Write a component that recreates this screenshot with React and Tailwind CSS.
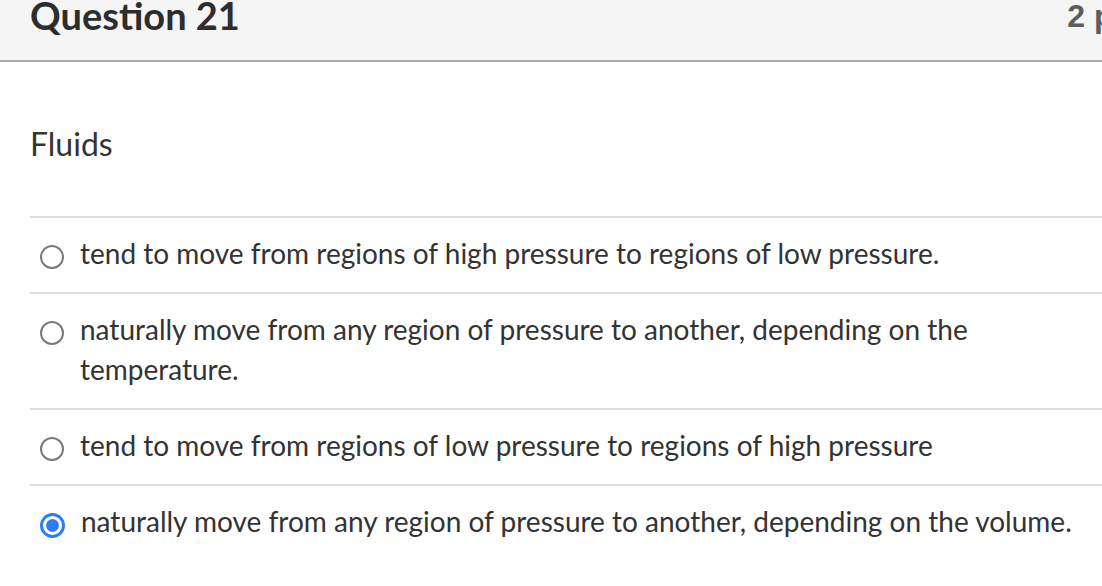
import React from "react";

const opciones = [
  { id: 1, texto: "tend to move from regions of high pressure to regions of low pressure." },
  {
    id: 2,
    texto: "naturally move from any region of pressure to another, depending on the temperature.",
  },
  { id: 3, texto: "tend to move from regions of low pressure to regions of high pressure" },
  {
    id: 4,
    texto: "naturally move from any region of pressure to another, depending on the volume.",
    marcada: true,
  },
];

const Radio = ({ marcada }) =>
  marcada ? (
    <span className="w-[25px] h-[25px] rounded-full border-[3px] border-[#2f7cf6] flex items-center justify-center shrink-0 mt-[12px]">
      <span className="w-[13px] h-[13px] rounded-full bg-[#2f7cf6]" />
    </span>
  ) : (
    <span className="w-[24px] h-[24px] rounded-full border-2 border-[#7a7a7a] shrink-0 mt-[12px]" />
  );

export default function App() {
  return (
    <div className="w-[1102px] h-[586px] overflow-hidden bg-white font-['Lato',sans-serif] text-[#333333]">
      <div className="w-[1180px]">
        {/* Cabecera de la pregunta */}
        <div className="h-[62px] bg-[#f5f5f5] border-b-2 border-[#a8a8a8] flex items-start justify-between pl-[30px] pr-[38px]">
          <h2 className="text-[38px] font-bold leading-[34px] mt-[-2px] text-[#2d2d2d]">Question 21</h2>
          <span className="font-['Liberation_Sans',Arial,sans-serif] font-bold text-[32px] leading-[34px] mt-[-1px] text-[#5c5c5c]">
            2 pts
          </span>
        </div>

        <div className="pl-[30px]">
          <p className="text-[32px] leading-[40px] mt-[62px] mb-[52px]">Fluids</p>

          <div className="border-t-2 border-[#dddddd]">
            {opciones.map((op) => (
              <div
                key={op.id}
                className="flex items-start gap-[16px] pl-[10px] pt-[15px] pb-[19px] border-b-2 border-[#dddddd] last:border-b-0"
              >
                <Radio marcada={op.marcada} />
                <span className="text-[28px] leading-[40px] max-w-[1000px]">{op.texto}</span>
              </div>
            ))}
          </div>
        </div>
      </div>
    </div>
  );
}
